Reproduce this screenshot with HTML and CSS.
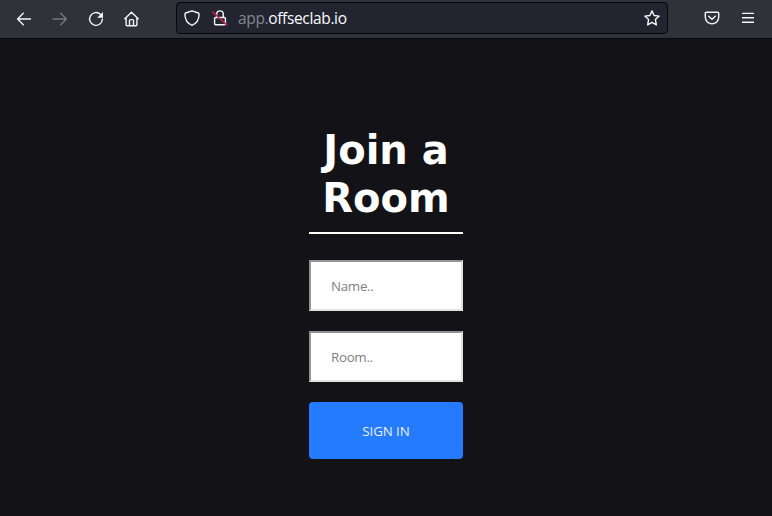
FILE: index.html
```html
<!DOCTYPE html>
<html lang="en">
<head>
<meta charset="utf-8">
<title>Join a Room</title>
<link rel="stylesheet" href="styles.css">
</head>
<body>
<header class="toolbar">
  <nav class="nav">
    <svg class="icon" viewBox="0 0 16 16"><path d="M14.500 8H1.7M7.3 2.3 1.6 8l5.7 5.7"/></svg>
    <svg class="icon dim" viewBox="0 0 16 16"><path d="M1 8h13.3M8.7 2.3 14.4 8l-5.7 5.7"/></svg>
    <svg class="icon" viewBox="0 0 16 16"><path d="M12.4 3.3A6.4 6.4 0 1 0 14.4 8"/><path class="solid" d="M15 1v5.8H9.2z"/></svg>
    <svg class="icon" viewBox="0 0 16 16"><path d="M.8 7.800 7.500 1.200 14.200 7.800M2.100 6.600v7.100c0 .6.400 1 1 1h8.800c.6 0 1-.4 1-1V6.600M5.500 14.500V9.600c0-.6.400-1 1-1h2c.6 0 1 .4 1 1v4.900"/></svg>
  </nav>
  <div class="address">
    <svg class="icon" viewBox="0 0 16 16"><path d="M8 .8 14.300 3c.6.200.8.600.8 1.200C15 9.500 12.500 13.500 8 15.300 3.500 13.500 1 9.500.9 4.200c0-.6.200-1 .8-1.200z"/></svg>
    <svg class="icon lock" viewBox="0 0 16 16"><path d="M4.700 7.300V4.200a3.300 3.300 0 0 1 6.600 0v3.100M3.600 7.500h8.800c.6 0 1 .4 1 1v5.200c0 .6-.4 1-1 1H3.600c-.6 0-1-.4-1-1V8.500c0-.6.4-1 1-1z"/><path class="slash" d="M1 2.200 14.700 15"/></svg>
    <span class="url">app.<b>offseclab.io</b></span>
    <svg class="icon star" viewBox="0 0 16 16"><path d="m8 .9 2.100 4.600 5.100.6-3.800 3.500 1 5.200L8 12.300l-4.400 2.500 1-5.200L.8 6.100l5.100-.6z"/></svg>
  </div>
  <div class="tools">
    <svg class="icon" viewBox="0 0 16 16"><path d="M2.300 2.300h11.400c.6 0 1 .4 1 1v4a6.700 6.500 0 0 1-13.400 0v-4c0-.6.400-1 1-1zM4.700 6.200 8 9.300l3.300-3.100"/></svg>
    <svg class="icon menu" viewBox="0 0 16 16"><path d="M2 3.400h12M2 7.700h12M2 12.200h12"/></svg>
  </div>
</header>
<main class="page">
  <form class="join">
    <h1 class="title">Join a Room</h1>
    <input class="field" type="text" placeholder="Name.." aria-label="Name">
    <input class="field" type="text" placeholder="Room.." aria-label="Room">
    <button class="submit" type="button">SIGN IN</button>
  </form>
</main>
</body>
</html>
```
FILE: styles.css
```css
* { box-sizing: border-box; }
body {
  margin: 0;
  height: 516px;
  overflow: hidden;
  background: #131217;
  color: #fff;
  font-family: "Open Sans", "Noto Sans", sans-serif;
}
.toolbar {
  display: flex;
  height: 39px;
  padding: 2px 16px 4px;
  background: #30323a;
  border-bottom: 1px solid #08080c;
}
.nav {
  display: flex;
  gap: 20px;
  width: 160px;
  padding-top: 9px;
}
.icon {
  flex: none;
  width: 16px;
  height: 16px;
  fill: none;
  stroke: #f4f4f8;
  stroke-width: 1.4;
  stroke-linecap: round;
  stroke-linejoin: round;
}
.dim { stroke: #75777e; }
.solid { fill: #f4f4f8; stroke: none; }
.slash { stroke: #c8204f; stroke-width: 1.6; }
.address {
  display: flex;
  align-items: center;
  width: 492px;
  height: 32px;
  padding: 0 7px;
  background: #222430;
  border: 1px solid #06070c;
  border-radius: 4px;
}
.lock { margin-left: 12px; }
.url {
  margin-left: 10px;
  font-size: 15.500px;
  letter-spacing: -0.35px;
  line-height: 20px;
  color: #85868e;
}
.url b { color: #fbfbfe; font-weight: 400; }
.star { margin-left: auto; }
.tools {
  display: flex;
  gap: 20px;
  margin-left: 36px;
  padding-top: 8px;
}
.menu { stroke-linecap: butt; }
.page {
  display: flex;
  justify-content: center;
  padding-top: 87px;
}
.join {
  display: flex;
  flex-direction: column;
  width: 154px;
}
.title {
  margin: 0 0 26px;
  padding-bottom: 10px;
  border-bottom: 2px solid #fff;
  font: bold 40px/48px "DejaVu Sans", sans-serif;
  text-align: center;
}
.field {
  width: 100%;
  height: 51px;
  margin: 0 0 20px;
  padding: 0 20px;
  background: #fff;
  border: 2px solid;
  border-color: #949297 #e1e3e1 #e1e3e1 #949297;
  border-radius: 0;
  font: 13.333px "Open Sans", "Noto Sans", sans-serif;
  letter-spacing: -0.3px;
}
.field::placeholder { color: #808080; }
.submit {
  height: 57px;
  padding: 0;
  background: #247bff;
  border: 0;
  border-radius: 4px;
  color: #e6f0ff;
  font: 13.333px "Open Sans", "Noto Sans", sans-serif;
  letter-spacing: -0.1px;
}
```
